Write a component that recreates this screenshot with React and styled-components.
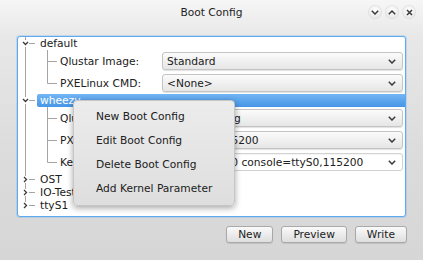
import React from "react";
import styled, { createGlobalStyle } from "styled-components";

const GlobalStyle = createGlobalStyle`
  html, body {
    margin: 0;
    padding: 0;
  }
  body {
    font-family: "DejaVu Sans", "Liberation Sans", sans-serif;
    font-size: 8pt;
    color: #202020;
    background: #ffffff;
  }
`;

const Window = styled.div`
  position: relative;
  width: 423px;
  height: 260px;
  display: flex;
  flex-direction: column;
  overflow: hidden;
  background: linear-gradient(#f6f6f6 0px, #e8e8e8 36px, #dcdcdc 150px, #d6d6d6 260px);
`;

const TitleBar = styled.div`
  height: 24px;
  display: grid;
  grid-template-columns: 1fr auto 1fr;
  align-items: center;
`;

const Title = styled.div`
  grid-column: 2;
  color: #1e1e1e;
`;

const TitleButtons = styled.div`
  justify-self: end;
  display: flex;
  gap: 5px;
  padding-right: 8px;
`;

const TitleButton = styled.div`
  width: 12px;
  height: 12px;
  border-radius: 50%;
  display: flex;
  align-items: center;
  justify-content: center;
  background: radial-gradient(circle at 50% 35%, #ffffff, #e2e2e2);
  box-shadow: 0 0 0 1px rgba(0, 0, 0, 0.07);
`;

const Content = styled.div`
  padding: 12px 17px 0 17px;
`;

const TreeBox = styled.div`
  box-sizing: border-box;
  height: 181px;
  background: #ffffff;
  border: 1px solid #5fa9ee;
  border-radius: 3px;
  box-shadow: 0 0 0 1px rgba(110, 175, 240, 0.3);
  overflow: hidden;
`;

const Row = styled.div`
  display: flex;
  align-items: center;
  height: ${(p) => p.$h}px;
`;

const Name = styled.div`
  flex: 1;
  height: 13px;
  line-height: 13px;
  padding-left: 3px;
  border-radius: 2px 0 0 2px;
  color: ${(p) => (p.$selected ? "#ffffff" : "#202020")};
  background: ${(p) =>
    p.$selected ? "linear-gradient(#72b6f4, #4795e6)" : "transparent"};
`;

const Label = styled.div`
  width: 102px;
  white-space: nowrap;
`;

const Combo = styled.div`
  box-sizing: border-box;
  flex: 1;
  height: 18px;
  margin-right: 2px;
  display: flex;
  align-items: center;
  justify-content: space-between;
  padding: 0 6px 0 4px;
  border-radius: 3px;
  white-space: nowrap;
  border: 1px solid ${(p) => (p.$editable ? "#d2d2d2" : "#c4c4c4")};
  background: ${(p) =>
    p.$editable ? "#ffffff" : "linear-gradient(#fbfbfb, #e6e6e6)"};
  box-shadow: ${(p) =>
    p.$editable ? "inset 0 1px 1px rgba(0,0,0,0.05)" : "0 1px 1px rgba(0,0,0,0.12)"};
`;

const Footer = styled.div`
  display: flex;
  justify-content: flex-end;
  gap: 8px;
  padding: 9px 16px 0 0;
`;

const Button = styled.div`
  box-sizing: border-box;
  height: 17px;
  line-height: 15px;
  padding: 0 11px;
  border: 1px solid #a9a9a9;
  border-radius: 3px;
  color: #222222;
  background: linear-gradient(#fafafa, #dedede);
  box-shadow: 0 1px 1px rgba(0, 0, 0, 0.1);
`;

const Menu = styled.div`
  position: absolute;
  left: 73px;
  top: 100px;
  width: 162px;
  box-sizing: border-box;
  padding: 4px 0;
  border: 1px solid #c6c6c6;
  border-radius: 4px;
  background: linear-gradient(#ececec, #dedede);
  box-shadow: 0 2px 6px rgba(0, 0, 0, 0.35);
`;

const MenuItem = styled.div`
  height: 24px;
  line-height: 24px;
  padding-left: 22px;
  color: #202020;
`;

const LINE = "#a4a4a4";
const INK = "#3a3a3a";

const Chevron = ({ up }) => (
  <svg width="8" height="5" viewBox="0 0 8 5">
    <path
      d={up ? "M0.8 4.2 L4 1 L7.2 4.2" : "M0.8 0.8 L4 4 L7.2 0.8"}
      fill="none"
      stroke={INK}
      strokeWidth="1.5"
    />
  </svg>
);

const Close = () => (
  <svg width="7" height="7" viewBox="0 0 7 7">
    <path d="M1 1 L6 6 M6 1 L1 6" stroke={INK} strokeWidth="1.5" />
  </svg>
);

// branch lines + expand arrow of a top-level item
const RootGuide = ({ expanded, last }) => (
  <svg width="19" height="13" viewBox="0 0 19 13">
    <line x1="7.5" y1="0" x2="7.5" y2="3" stroke={LINE} />
    {!last && <line x1="7.5" y1="10" x2="7.5" y2="13" stroke={LINE} />}
    <line x1="11" y1="6.5" x2="17" y2="6.5" stroke={LINE} />
    <path
      d={expanded ? "M5 5 L7.5 7.5 L10 5" : "M6 4 L8.5 6.5 L6 9"}
      fill="none"
      stroke={INK}
      strokeWidth="1.3"
    />
  </svg>
);

// branch lines of a child item
const ChildGuide = ({ last }) => (
  <svg width="42" height="22" viewBox="0 0 42 22">
    <line x1="7.5" y1="0" x2="7.5" y2="22" stroke={LINE} />
    <line x1="29.5" y1="0" x2="29.5" y2={last ? 11.5 : 22} stroke={LINE} />
    <line x1="29.5" y1="11.5" x2="39" y2="11.5" stroke={LINE} />
  </svg>
);

const RootRow = ({ name, expanded, selected, last }) => (
  <Row $h={13}>
    <RootGuide expanded={expanded} last={last} />
    <Name $selected={selected}>{name}</Name>
  </Row>
);

const ChildRow = ({ label, value, last, editable }) => (
  <Row $h={22}>
    <ChildGuide last={last} />
    <Label>{label}</Label>
    <Combo $editable={editable}>
      <span>{value}</span>
      <Chevron />
    </Combo>
  </Row>
);

const configs = [
  {
    name: "default",
    children: [
      { label: "Qlustar Image:", value: "Standard" },
      { label: "PXELinux CMD:", value: "<None>" },
    ],
  },
  {
    name: "wheezy",
    selected: true,
    children: [
      { label: "Qlustar Image:", value: "Lustre Testing" },
      { label: "PXELinux CMD:", value: "SERIAL 0 115200" },
      {
        label: "Kernel Params:",
        value: "console=tty0 console=ttyS0,115200",
        editable: true,
      },
    ],
  },
  { name: "OST" },
  { name: "IO-Test" },
  { name: "ttyS1" },
];

const menuItems = [
  "New Boot Config",
  "Edit Boot Config",
  "Delete Boot Config",
  "Add Kernel Parameter",
];

export default function App() {
  return (
    <>
      <GlobalStyle />
      <Window>
        <TitleBar>
          <Title>Boot Config</Title>
          <TitleButtons>
            <TitleButton>
              <Chevron />
            </TitleButton>
            <TitleButton>
              <Chevron up />
            </TitleButton>
            <TitleButton>
              <Close />
            </TitleButton>
          </TitleButtons>
        </TitleBar>
        <Content>
          <TreeBox>
            {configs.map((c, i) => (
              <React.Fragment key={c.name}>
                <RootRow
                  name={c.name}
                  expanded={!!c.children}
                  selected={c.selected}
                  last={i === configs.length - 1}
                />
                {c.children &&
                  c.children.map((ch, j) => (
                    <ChildRow
                      key={ch.label}
                      {...ch}
                      last={j === c.children.length - 1}
                    />
                  ))}
              </React.Fragment>
            ))}
          </TreeBox>
        </Content>
        <Footer>
          <Button>New</Button>
          <Button>Preview</Button>
          <Button>Write</Button>
        </Footer>
        <Menu>
          {menuItems.map((m) => (
            <MenuItem key={m}>{m}</MenuItem>
          ))}
        </Menu>
      </Window>
    </>
  );
}
